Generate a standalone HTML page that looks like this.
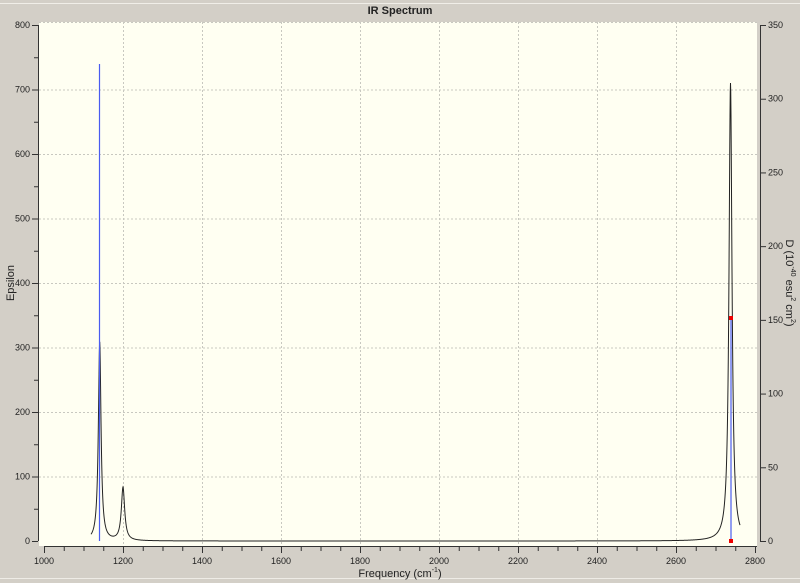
<!DOCTYPE html>
<html><head><meta charset="utf-8"><style>
html,body{margin:0;padding:0;background:#d4d0c8;}
body{width:800px;height:583px;overflow:hidden;position:relative;font-family:"Liberation Sans",sans-serif;}
svg{position:absolute;left:0;top:0;}
text{font-family:"Liberation Sans",sans-serif;fill:#222;}
</style></head><body>
<svg width="800" height="583" viewBox="0 0 800 583" xmlns="http://www.w3.org/2000/svg">
<rect x="0" y="0" width="800" height="583" fill="#d3cfc7"/>
<line x1="0" y1="3.5" x2="800" y2="3.5" stroke="#f0eee8"/>
<line x1="0" y1="578.5" x2="800" y2="578.5" stroke="#eeece6"/>
<text x="400" y="14" text-anchor="middle" font-size="11" font-weight="bold" fill="#111">IR Spectrum</text>
<rect x="39" y="22" width="718" height="524" fill="#fffff2"/>
<g id="grid" stroke="#c8c8c0" stroke-dasharray="2,2" stroke-width="1"></g>
<g id="axes" stroke="#333" stroke-width="1" fill="none"></g>
<g id="labels" font-size="9"></g>
<text transform="translate(14,283) rotate(-90)" text-anchor="middle" font-size="11" fill="#111">Epsilon</text>
<text transform="translate(786,283) rotate(90)" text-anchor="middle" font-size="11" fill="#111">D (10<tspan font-size="7" dy="-5">-40</tspan><tspan dy="5"> esu</tspan><tspan font-size="7" dy="-5">2</tspan><tspan dy="5"> cm</tspan><tspan font-size="7" dy="-5">2</tspan><tspan dy="5">)</tspan></text>
<text x="400" y="577" text-anchor="middle" font-size="11" fill="#111">Frequency (cm<tspan font-size="7" dy="-5">-1</tspan><tspan dy="5">)</tspan></text>
<path id="curve" fill="none" stroke="#222" stroke-width="1"/>
<line x1="99.5" y1="64" x2="99.5" y2="541" stroke="#4a5cf0" stroke-width="1.2"/>
<line x1="731" y1="318" x2="731" y2="541" stroke="#4a5cf0" stroke-width="1.2"/>
<rect x="729" y="316" width="4" height="4" fill="#e00"/>
<rect x="729" y="539" width="4" height="4" fill="#e00"/>
</svg>
<script>
var ns="http://www.w3.org/2000/svg";
function el(p,n,a,t){var e=document.createElementNS(ns,n);for(var k in a)e.setAttribute(k,a[k]);if(t)e.textContent=t;document.getElementById(p).appendChild(e);}
var y0=541,sy=0.645;
// horizontal grid + left labels
for(var v=0;v<=800;v+=100){var y=y0-v*sy;
 if(v>0&&v<800)el("grid","line",{x1:39,y1:y+.5,x2:757,y2:y+.5});
 el("axes","line",{x1:32,y1:y+.5,x2:38,y2:y+.5});
 el("labels","text",{x:30,y:y+3,"text-anchor":"end"},v==0?"0":v.toString());
 if(v<800){var y2=y-50*sy;el("axes","line",{x1:34,y1:y2+.5,x2:38,y2:y2+.5});}
}
el("grid","line",{x1:39,y1:22.5,x2:757,y2:22.5});
// right axis
var sr=(541-25)/350;
for(var v=0;v<=350;v+=50){var y=y0-v*sr;el("axes","line",{x1:760,y1:y+.5,x2:766,y2:y+.5});el("labels","text",{x:768,y:y+3},v==0?"0":v.toString());}
el("axes","line",{x1:760.5,y1:25,x2:760.5,y2:541});
el("axes","line",{x1:38.5,y1:25,x2:38.5,y2:541});
// x axis
function fx(f){return 44+(f-1000)*0.395;}
for(var f=1000;f<=2800;f+=50){var x=fx(f);
 var big=(f%200==0);
 el("axes","line",{x1:x+.5,y1:546,x2:x+.5,y2:big?553:551});
 if(big){el("labels","text",{x:x,y:564,"text-anchor":"middle"},f.toString());
  if(f>1000&&f<2800)el("grid","line",{x1:x+.5,y1:22,x2:x+.5,y2:546});}
}
el("axes","line",{x1:44,y1:546.5,x2:757,y2:546.5});
// curve (lorentzians, pixel space)
var pk=[[99.7,199,1.6],[123,53,2.0],[730.5,458,1.8]];
var d="";for(var x=91;x<=740;x+=0.25){var s=0;for(var i=0;i<pk.length;i++){var dx=x-pk[i][0],w=pk[i][2];s+=pk[i][1]*w*w/(dx*dx+w*w);}
 var y=y0-s;d+=(d?"L":"M")+x.toFixed(2)+","+y.toFixed(2);}
document.getElementById("curve").setAttribute("d",d);
</script>
</body></html>
